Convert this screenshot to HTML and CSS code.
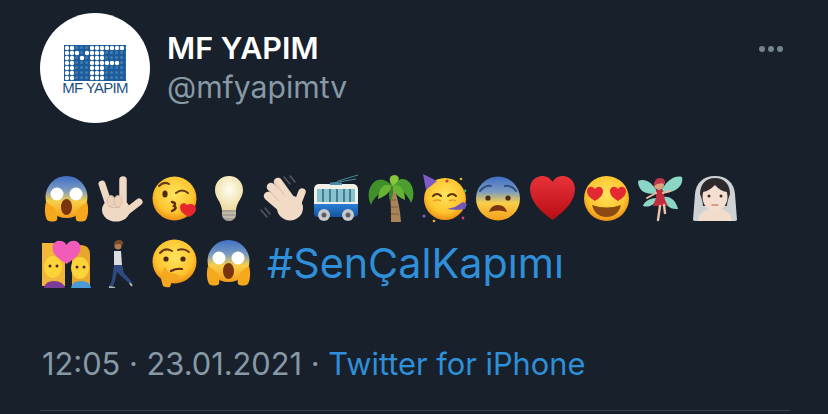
FILE: index.html
```html
<!DOCTYPE html>
<html lang="en">
<head>
    <meta charset="UTF-8">
    <meta name="viewport" content="width=device-width, initial-scale=1.0">
    <title>MF YAPIM on Twitter</title>
    <link rel="stylesheet" href="styles.css">
</head>
<body>
    <!-- shared gradients and the emoji drawings, 54x50 cells -->
    <svg class="sprite" aria-hidden="true">
        <defs>
            <radialGradient id="faceYellow" cx="50%" cy="40%" r="60%">
                <stop offset="0" stop-color="#ffe45c"/>
                <stop offset="0.7" stop-color="#fdc52f"/>
                <stop offset="1" stop-color="#ee8f14"/>
            </radialGradient>
            <linearGradient id="faceFear" x1="0" y1="0" x2="0" y2="1">
                <stop offset="0" stop-color="#3f6fc6"/>
                <stop offset="0.35" stop-color="#7d9cc0"/>
                <stop offset="0.6" stop-color="#f8cf49"/>
                <stop offset="1" stop-color="#f39d1a"/>
            </linearGradient>
            <linearGradient id="heartRed" x1="0" y1="0" x2="0" y2="1">
                <stop offset="0" stop-color="#e8323a"/>
                <stop offset="1" stop-color="#b80d14"/>
            </linearGradient>
            <radialGradient id="bulbGlow" cx="50%" cy="40%" r="60%">
                <stop offset="0" stop-color="#fffdf0"/>
                <stop offset="1" stop-color="#eedca0"/>
            </radialGradient>
            <linearGradient id="busBlue" x1="0" y1="0" x2="0" y2="1">
                <stop offset="0" stop-color="#2a7fd6"/>
                <stop offset="1" stop-color="#14549f"/>
            </linearGradient>
            <pattern id="logoGrid" width="5" height="5" patternUnits="userSpaceOnUse">
                <circle cx="2.5" cy="2.5" r="1.5" fill="#3f7cb4"/>
            </pattern>
        </defs>
        <symbol id="scream" viewBox="0 0 54 50">
            <circle cx="24.5" cy="23" r="21" fill="url(#faceFear)"/>
            <circle cx="15" cy="20" r="6.5" fill="#fff"/>
            <circle cx="34" cy="20" r="6.5" fill="#fff"/>
            <ellipse cx="24.5" cy="33" rx="5.5" ry="8" fill="#7b3410"/>
            <path d="M4 28c-2 7-1 14 1 18 3 2 8 2 10 0 1-5 0-9-4-13z" fill="#f6a81c"/>
            <path d="M45 28c2 7 1 14-1 18-3 2-8 2-10 0-1-5 0-9 4-13z" fill="#f6a81c"/>
        </symbol>
    </svg>

    <header class="tweet-head">
        <div class="avatar">
            <svg class="logo-mark" viewBox="0 0 62 36">
                <rect width="62" height="36" fill="#1d5c99"/>
                <rect width="62" height="36" fill="url(#logoGrid)"/>
                <g class="logo-dots">
                    <path d="M3 3V36M8 3V36M13 8V13M18 13V18M28 3V36M33 3V36"/>
                    <path d="M23 8V13M38 3H62M38 8H43M38 13H43M38 18H58M38 23H43M38 28H43M38 33H43"/>
                </g>
            </svg>
            <span class="logo-name">MF YAPIM</span>
        </div>
        <div class="names">
            <div class="name">MF YAPIM</div>
            <div class="handle">@mfyapimtv</div>
        </div>
        <div class="more"><i></i><i></i><i></i></div>
    </header>

    <div class="tweet-text">
        <div class="emoji-row">
            <svg class="emoji"><use href="#scream"/></svg>

            <svg class="emoji" viewBox="0 0 54 50">
                <g fill="none" stroke="#f0d9c4" stroke-linecap="round">
                    <path d="M6 10l6 18" stroke-width="7"/>
                    <path d="M27 6v24" stroke-width="7.5"/>
                    <path d="M30 38l13-10" stroke-width="7"/>
                </g>
                <ellipse cx="20" cy="36" rx="14" ry="11.5" fill="#f0d9c4"/>
                <g fill="#ecd2bb" stroke="#d6b79e" stroke-width="0.8">
                    <ellipse cx="15" cy="27" rx="4" ry="5.500"/>
                    <ellipse cx="22" cy="27" rx="4" ry="5.500"/>
                </g>
                <path d="M12 32q5 3 12 1" fill="none" stroke="#d6b79e" stroke-width="1"/>
            </svg>

            <svg class="emoji" viewBox="0 0 54 50">
                <circle cx="24.5" cy="24.5" r="22" fill="url(#faceYellow)"/>
                <ellipse cx="15" cy="20" rx="2.6" ry="3.6" fill="#4a2a10"/>
                <path d="M9 12q5-5 10-2M26 19q6-5 12 0" fill="none" stroke="#6a3a10" stroke-width="2" stroke-linecap="round"/>
                <path d="M22 28q5 1 2 4 4 2-2 5" fill="none" stroke="#5b2a0c" stroke-width="2.4" stroke-linecap="round"/>
                <path d="M39 43c-6-3-9-6-9-10 0-4 5-5 7-2 3-2 9-1 9 4 0 3-3 6-7 8z" fill="#e8262e"/>
            </svg>

            <svg class="emoji" viewBox="0 0 54 50">
                <path d="M25 2c8 0 14 6 14 14 0 8-6 11-7 20H18c-1-9-7-12-7-20C11 8 17 2 25 2z" fill="url(#bulbGlow)"/>
                <path d="M18 36h14v6q-2 5-7 5t-7-5z" fill="#a9a294"/>
                <path d="M18 39h14M19 43h12" stroke="#d4cfc2" stroke-width="1.2"/>
            </svg>

            <svg class="emoji" viewBox="0 0 54 50">
                <g fill="none" stroke="#f1dac6" stroke-linecap="round" stroke-width="8.500">
                    <path d="M20 8l13 18"/>
                    <path d="M13 13l14 16"/>
                    <path d="M10 22l15 13"/>
                    <path d="M44 18l-5 13" stroke-width="7.500"/>
                </g>
                <ellipse cx="32" cy="34" rx="13" ry="12.500" fill="#f1dac6"/>
                <path d="M16.500 8l10 13M11 16l10 11" stroke="#d8bca4" stroke-width="0.900"/>
                <path d="M26 3l6 7M32 2l5 6M3 36l6 7M7 34l5 6" stroke="#565c62" stroke-width="1.4" stroke-linecap="round"/>
            </svg>

            <svg class="emoji" viewBox="0 0 54 50">
                <path d="M23 10l3-3 20-6M21 9l23-4" fill="none" stroke="#4d8897" stroke-width="1"/>
                <rect x="2" y="10" width="44" height="32" rx="5" fill="#f1efe7"/>
                <rect x="5" y="15" width="38" height="13" fill="#86c4cf"/>
                <path d="M11 15v13M18 15v13M25 15v13M32 15v13M38 15v13" stroke="#2f5f78" stroke-width="1.4"/>
                <path d="M2 30h44v9q0 4-4 4H6q-4 0-4-4z" fill="url(#busBlue)"/>
                <rect x="18" y="8.500" width="12" height="2.500" fill="#4b8ea3"/>
                <circle cx="12" cy="41" r="6" fill="#c6c8cb"/>
                <circle cx="12" cy="41" r="2.500" fill="#5b5f66"/>
                <circle cx="36" cy="41" r="6" fill="#c6c8cb"/>
                <circle cx="36" cy="41" r="2.500" fill="#5b5f66"/>
            </svg>

            <svg class="emoji" viewBox="0 0 54 50">
                <path d="M23 14c2 11 2 22 2 34h10c-1-12-3-24-7-34z" fill="#a88458"/>
                <path d="M25 26h5M25 33h7M25 40h8" stroke="#7b5c3c" stroke-width="1.200"/>
                <path d="M26 12C17 1 6 5 3 17c-1 5 0 10 2 14 3-8 10-14 21-19z" fill="#3f8f2a"/>
                <path d="M26 12C34 0 45 5 47 16c1 5 0 9-2 13-3-8-9-14-19-17z" fill="#4c9f2e"/>
                <path d="M26 12C21 4 25 1 29 1c5 1 6 6-3 11z" fill="#86c53f"/>
                <path d="M26 12c-8-4-13 2-14 13 6-2 12-6 14-13zM26 12c7-3 13 3 13 14-7-3-11-7-13-14z" fill="#67b334"/>
                <path d="M26 12c-3 5-4 9-2 15 3-4 4-9 2-15z" fill="#3b8526"/>
            </svg>

            <svg class="emoji" viewBox="0 0 54 50">
                <circle cx="25" cy="25" r="21" fill="url(#faceYellow)"/>
                <path d="M3 0l14 7-11 9z" fill="#7d5cc4"/>
                <path d="M13 22q4-4 8 0M28 22q4-4 8 0" fill="none" stroke="#5b3010" stroke-width="2" stroke-linecap="round"/>
                <path d="M13 27q5-2 8 0M29 27q4-2 7 0" fill="none" stroke="#e89a2b" stroke-width="1.6"/>
                <path d="M27 35l8-2 8-5 4 2-2 5-8 1z" fill="#6f58b8"/>
                <circle cx="27" cy="7" r="1.6" fill="#d83a3a"/>
                <circle cx="41" cy="5" r="1.3" fill="#e8b22c"/>
                <circle cx="45" cy="17" r="1.4" fill="#58b25c"/>
                <circle cx="4" cy="42" r="1.5" fill="#8a62d0"/>
                <circle cx="14" cy="47" r="1.3" fill="#e8b22c"/>
                <circle cx="43" cy="44" r="1.4" fill="#d83a7a"/>
            </svg>

            <svg class="emoji" viewBox="0 0 54 50">
                <circle cx="24" cy="24.5" r="22" fill="url(#faceFear)"/>
                <path d="M6 17q5-6 11-5M31 12q7-1 11 5" fill="none" stroke="#30507f" stroke-width="2" stroke-linecap="round"/>
                <circle cx="14" cy="24" r="2.6" fill="#4a2a10"/>
                <circle cx="34" cy="24" r="2.6" fill="#4a2a10"/>
                <path d="M15 38q2-7 9-7t9 7q-9-3-18 0z" fill="#7b3410"/>
            </svg>

            <svg class="emoji" viewBox="0 0 54 50">
                <path d="M24.500 46C12 37 2 27 2 15 2 7 8 2 14 2c5 0 8 2 10.500 6C27 4 30 2 35 2c6 0 12 5 12 13 0 12-10 22-22.500 31z" fill="url(#heartRed)"/>
            </svg>

            <svg class="emoji" viewBox="0 0 54 50">
                <circle cx="24.500" cy="24.500" r="22.500" fill="url(#faceYellow)"/>
                <path d="M13 27c-5-3-8-6-8-10 0-4 5-6 8-2 3-4 8-2 8 2 0 4-3 7-8 10zM36 27c-5-3-8-6-8-10 0-4 5-6 8-2 3-4 8-2 8 2 0 4-3 7-8 10z" fill="#e22a30"/>
                <path d="M10 31q14.500 5 29 0-3 12-14.500 12T10 31z" fill="#8b4a12"/>
            </svg>

            <svg class="emoji" viewBox="0 0 54 50">
                <path d="M22 19C16 7 8 4 2 7c0 9 7 15 20 12zM24 19C30 7 38 1 46 3c2 9-7 17-22 16zM21 24c-8 0-13 4-14 8 6 2 12-1 14-8zM27 23c8-1 13 4 15 12-8 1-14-5-15-12z" fill="#8bd6c5"/>
                <circle cx="23" cy="11" r="5" fill="#e0a080"/>
                <path d="M18 12q0-8 6-8t5 6q-6-2-11 2z" fill="#c0364a"/>
                <path d="M20 16h7l2 10 3 6H17l3-8z" fill="#c22c3c"/>
                <path d="M24 32l-2 14M28 31l1 8" stroke="#ecc4a8" stroke-width="2.4" stroke-linecap="round"/>
                <path d="M20 19l-9 5M27 19l7-2" stroke="#e8bda0" stroke-width="2" stroke-linecap="round"/>
            </svg>

            <svg class="emoji" viewBox="0 0 54 50">
                <path d="M25 2C13 2 6 9 5 20l-2 26q1 1 2 1h40q1 0 2-1l-2-26C44 9 37 2 25 2z" fill="#cfd2d4"/>
                <path d="M25 4C15 4 10 11 10 20q3 8 3 12h24q0-4 3-12C40 11 35 4 25 4z" fill="#2e2a2c"/>
                <path d="M8 47q1-10 12-12h10q11 2 12 12z" fill="#f2dccb"/>
                <ellipse cx="25" cy="23" rx="12.500" ry="14" fill="#f4ded0"/>
                <path d="M13 18q6-1 12-7 5 6 12 7-1-11-12-11T13 18z" fill="#2e2a2c"/>
                <circle cx="19" cy="22" r="1.500" fill="#3a2a22"/>
                <circle cx="31" cy="22" r="1.500" fill="#3a2a22"/>
                <path d="M22 31h6" stroke="#c88a78" stroke-width="1.300" stroke-linecap="round"/>
            </svg>
        </div>

        <div class="emoji-row">
            <svg class="emoji" viewBox="0 0 54 50">
                <path d="M0 5h14q8 0 9 14v29H0z" fill="#f2b63a"/>
                <path d="M30 48V20q1-13 9-13 9 0 9 10v31z" fill="#e8a62c"/>
                <ellipse cx="11" cy="29" rx="9" ry="11" fill="#fcd43a"/>
                <ellipse cx="38" cy="30" rx="9" ry="11" fill="#fcd43a"/>
                <circle cx="8" cy="28" r="1.500" fill="#4a2a10"/>
                <circle cx="15" cy="28" r="1.500" fill="#4a2a10"/>
                <circle cx="35" cy="29" r="1.500" fill="#4a2a10"/>
                <circle cx="42" cy="29" r="1.500" fill="#4a2a10"/>
                <path d="M2 50q1-7 10-7t11 7z" fill="#7a3d96"/>
                <path d="M29 50q1-7 10-7t10 7z" fill="#4b9ad8"/>
                <path d="M24.500 26c-9-6-14-10-14-16 0-5 4-8 8-7 3 0 5 2 6 4 1-2 3-4 6-4 4-1 8 2 8 7 0 6-5 10-14 16z" fill="#f05cb8"/>
            </svg>

            <svg class="emoji" viewBox="0 0 54 50">
                <circle cx="22" cy="8" r="3.500" fill="#b07a50"/>
                <path d="M18 7q0-5 5-5t4 5q-5-2-9 0z" fill="#7a4a2a"/>
                <path d="M18 13h7l1 14h-8z" fill="#dcdde0"/>
                <path d="M18 27h8l2 8 8 9-2 2-10-9-3-3-2 9-3 7-3-1 3-7z" fill="#2f4a80"/>
                <path d="M13 49l6 1M34 45l2 3" stroke="#b0b4b8" stroke-width="2"/>
            </svg>

            <svg class="emoji" viewBox="0 0 54 50">
                <circle cx="24.500" cy="23.500" r="22" fill="url(#faceYellow)"/>
                <path d="M10 15q5-6 12-2M28 12q6-2 11 2" fill="none" stroke="#6a3a10" stroke-width="2" stroke-linecap="round"/>
                <circle cx="16" cy="21" r="2.600" fill="#4a2a10"/>
                <circle cx="33" cy="21" r="2.600" fill="#4a2a10"/>
                <path d="M21 33q6-3 11-2" fill="none" stroke="#5b2a0c" stroke-width="2.200" stroke-linecap="round"/>
                <path d="M13 48q-4-10 0-16l2-3 3 5 11 3 1 4-8 2-2 6q-4 1-7-1z" fill="#f4a71f"/>
            </svg>

            <svg class="emoji"><use href="#scream"/></svg>

            <a class="hashtag">#SenÇalKapımı</a>
        </div>
    </div>

    <footer class="tweet-meta">
        <span>12:05 · 23.01.2021 · </span><a class="source">Twitter for iPhone</a>
    </footer>
    <div class="divider"></div>
</body>
</html>
```

FILE: styles.css
```css
body {
    margin: 0;
    height: 414px;
    overflow: hidden;
    background-color: #17202b;
    font-family: Inter, "Liberation Sans", sans-serif;
    color: #fff;
}
.sprite {
    display: block;
    width: 0;
    height: 0;
}

/* header */
.tweet-head {
    display: flex;
    padding: 13px 45px 0 40px;
    height: 111px;
    box-sizing: border-box;
}
.avatar {
    width: 110px;
    height: 110px;
    flex-shrink: 0;
    border-radius: 50%;
    background-color: #fff;
    display: flex;
    flex-direction: column;
    align-items: center;
    justify-content: center;
}
.logo-mark {
    width: 62px;
    height: 36px;
    margin-top: 3px;
}
.logo-dots path {
    fill: none;
    stroke: #fff;
    stroke-width: 4.4;
    stroke-linecap: round;
    stroke-dasharray: 0 5;
}
.logo-name {
    font-family: "Liberation Sans", sans-serif;
    font-size: 15px;
    line-height: 14px;
    color: #1d4f7f;
    letter-spacing: -0.7px;
}
.names {
    margin-left: 17px;
    padding-top: 16px;
    flex-grow: 1;
}
.name {
    font-size: 30.5px;
    font-weight: 600;
    line-height: 38px;
}
.handle {
    font-size: 30.2px;
    line-height: 40px;
    color: #8899a6;
}
.more {
    display: flex;
    gap: 3px;
    margin-top: 33px;
}
.more i {
    width: 6px;
    height: 6px;
    border-radius: 50%;
    background-color: #73838f;
}

/* tweet body */
.tweet-text {
    padding: 63px 0 0 42px;
}
.emoji-row {
    display: flex;
    align-items: center;
    height: 50px;
    margin-bottom: 14px;
}
.emoji {
    width: 54px;
    height: 50px;
    flex-shrink: 0;
}
.hashtag {
    margin-left: 9px;
    font-size: 41.3px;
    color: #2f8fd8;
}

/* footer */
.tweet-meta {
    margin: 56px 0 0 42px;
    font-size: 30.8px;
    line-height: 40px;
    color: #8899a6;
}
.source {
    color: #2f8fd8;
}
.divider {
    margin: 26px 38px 0 40px;
    height: 1px;
    background-color: #38444d;
}
```
